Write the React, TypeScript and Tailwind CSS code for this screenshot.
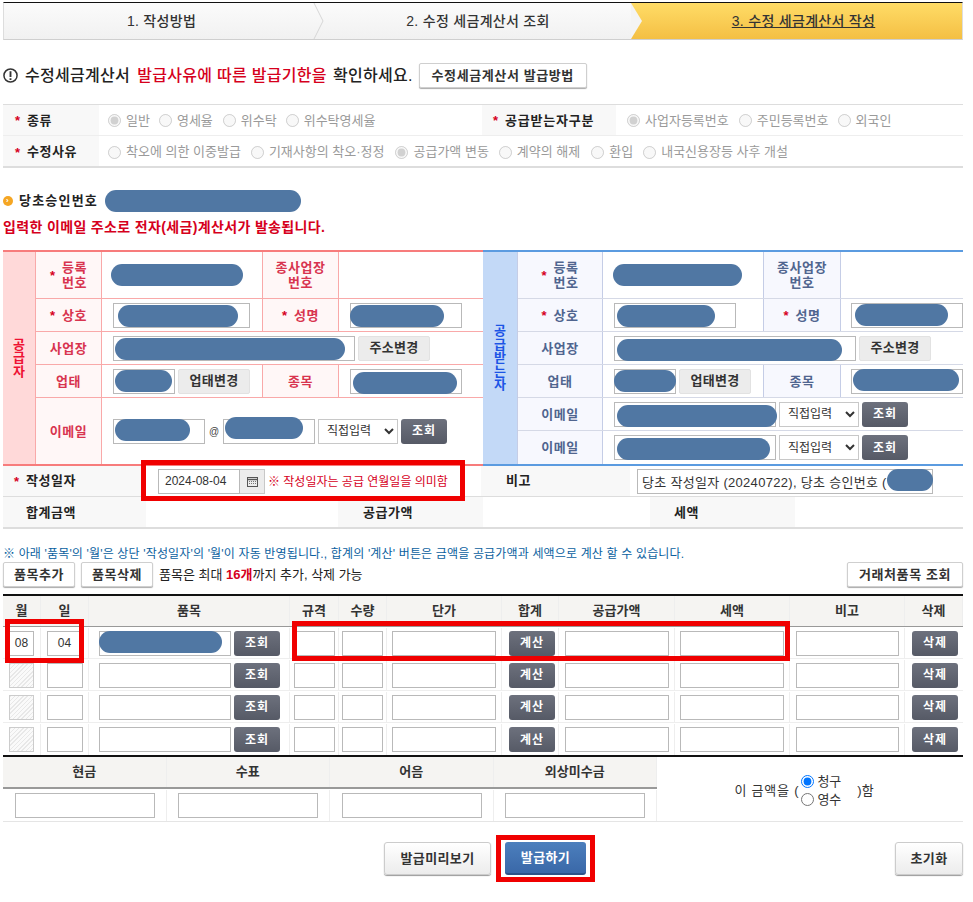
import React from "react";

const inputCls = "block h-[25px] border border-[#b9b9b9] bg-white px-1 text-[12px] text-[#333] outline-none";

const Star = () => <span className="mr-[7px] text-[13px] font-bold leading-none tracking-normal text-[#d6001c]">*</span>;

const DarkBtn = ({ label, w }: { label: string; w: string }) => (
  <button className={`flex h-[25px] items-center justify-center rounded-[3px] bg-gradient-to-b from-[#6d717d] to-[#565a66] text-[12px] font-bold tracking-[1px] text-white ${w}`}>
    {label}
  </button>
);

const GreyBtn = ({ label }: { label: string }) => (
  <button className="flex h-[25px] w-[72px] items-center justify-center rounded-[2px] border border-[#e2e2e2] bg-[#ececec] text-[13px] font-bold tracking-[0.3px] text-[#333]">
    {label}
  </button>
);

const WhiteBtn = ({ label, w }: { label: string; w: string }) => (
  <button className={`flex h-[25px] items-center justify-center rounded-[2px] border border-[#cfcfcf] bg-white text-[13px] font-bold tracking-[0.6px] text-[#333] shadow-[0_1px_1px_#aaa] ${w}`}>
    {label}
  </button>
);

const Radio = ({ label, checked, mr }: { label: string; checked?: boolean; mr: string }) => (
  <label className={`flex items-center text-[13px] text-[#9a9a9a] ${mr}`}>
    <input type="radio" disabled defaultChecked={checked} className="m-0 mr-[5px] h-[13px] w-[13px]" />
    {label}
  </label>
);

const EmailSelect = () => (
  <select defaultValue="직접입력" className="h-[25px] w-[80px] border border-[#c8c8c8] bg-white pl-1 text-[12px] text-[#333]">
    <option>직접입력</option>
  </select>
);

const items = [0, 1, 2, 3];

export default function App() {
  const cellL = "flex items-center justify-center border-r border-[#f9a9a9] bg-[#fff7f7] text-center text-[13px] font-bold leading-[15px] tracking-[0.5px] text-[#d8344f]";
  const cellR = "flex items-center justify-center border-r border-[#c5cde6] bg-[#f7f8fe] text-center text-[13px] font-bold leading-[15px] tracking-[0.5px] text-[#50658f]";
  const rowL = "grid grid-cols-[66px_161px_76px_1fr] border-b border-[#f9a9a9]";
  const rowR = "grid grid-cols-[85px_161px_77px_1fr] border-b border-[#d5d9e6]";
  const th = "flex items-center justify-center border-r border-[#eeeeee] text-[13px] font-bold text-[#333]";
  const td = "flex items-center justify-center border-r border-[#eeeeee]";

  return (
    <div className="relative h-[902px] w-[973px] overflow-hidden bg-white pl-[3px] pr-[10px] pt-[2px] font-['Liberation_Sans','Noto_Sans_CJK_KR',sans-serif] text-[#222]">
      {/* steps */}
      <div className="flex h-[38px] border-x border-b border-t border-x-[#ddd] border-b-[#cfcfcf] border-t-[#111] bg-gradient-to-b from-[#fbfbfb] to-[#f1f1f1] text-[14px] font-medium tracking-[0.3px] text-[#333]">
        <div className="relative flex w-[311px] items-center justify-center pl-[4px]">
          1. 작성방법
          <svg className="absolute right-[-10px] top-0 z-10 h-[36px] w-[12px]" viewBox="0 0 12 36" fill="none">
            <path d="M1 0 L10 18 L1 36" stroke="#d6d6d6" strokeWidth="1" />
          </svg>
        </div>
        <div className="relative flex w-[316px] items-center justify-center pl-[10px]">
          2. 수정 세금계산서 조회
          <svg className="absolute right-[-12px] top-0 z-10 h-[36px] w-[12px]" viewBox="0 0 12 36">
            <path d="M0 0 L11 18 L0 36 Z" fill="#f4f4f4" />
          </svg>
        </div>
        <div className="flex flex-1 items-center justify-center bg-gradient-to-b from-[#ffdc66] to-[#f4bf43] pl-[14px] underline">
          3. 수정 세금계산서 작성
        </div>
      </div>

      {/* heading */}
      <div className="mt-[23px] flex h-[25px] items-center text-[16px] font-medium tracking-[0.3px]">
        <svg className="mr-[7px] h-[15px] w-[15px]" viewBox="0 0 16 16" fill="none">
          <circle cx="8" cy="8" r="7" stroke="#333" strokeWidth="1.6" />
          <path d="M8 3.5 V9.5 M8 11 V12.8" stroke="#333" strokeWidth="2" />
        </svg>
        <span>수정세금계산서</span>
        <span className="ml-[7px] text-[#d6001c]">발급사유에 따른 발급기한을</span>
        <span className="ml-[6px]">확인하세요.</span>
        <WhiteBtn label="수정세금계산서 발급방법" w="ml-[6px] w-[168px]" />
      </div>

      {/* type radios */}
      <div className="mt-[16px] border-b-2 border-t border-b-[#ddd] border-t-[#ddd] text-[13px]">
        <div className="flex h-[31px] border-b border-[#eeeeee]">
          <div className="flex w-[96px] items-center bg-[#f8f8f8] pl-[12px] pt-[1px] font-bold tracking-[0.5px]"><Star />종류</div>
          <div className="flex w-[383px] items-center pl-[9px] pt-[1px]">
            <Radio label="일반" checked mr="mr-[9px]" />
            <Radio label="영세율" mr="mr-[10px]" />
            <Radio label="위수탁" mr="mr-[9px]" />
            <Radio label="위수탁영세율" mr="" />
          </div>
          <div className="flex w-[134px] items-center bg-[#f8f8f8] pl-[11px] pt-[1px] font-bold tracking-[0.8px]"><Star />공급받는자구분</div>
          <div className="flex flex-1 items-center pl-[11px] pt-[1px]">
            <Radio label="사업자등록번호" checked mr="mr-[10px]" />
            <Radio label="주민등록번호" mr="mr-[9px]" />
            <Radio label="외국인" mr="" />
          </div>
        </div>
        <div className="flex h-[30px]">
          <div className="flex w-[96px] items-center bg-[#f8f8f8] pl-[12px] pt-[2px] font-bold tracking-[0.5px]"><Star />수정사유</div>
          <div className="flex flex-1 items-center pl-[9px] pt-[2px]">
            <Radio label="착오에 의한 이중발급" mr="mr-[10px]" />
            <Radio label="기재사항의 착오·정정" mr="mr-[11px]" />
            <Radio label="공급가액 변동" checked mr="mr-[10px]" />
            <Radio label="계약의 해제" mr="mr-[11px]" />
            <Radio label="환입" mr="mr-[10px]" />
            <Radio label="내국신용장등 사후 개설" mr="" />
          </div>
        </div>
      </div>

      {/* original approval no */}
      <div className="mt-[22px] flex h-[22px] items-center text-[13px] font-bold tracking-[1.2px]">
        <span className="mr-[6px] flex h-[10px] w-[10px] items-center justify-center rounded-full bg-[#f5a623] text-[8px] leading-none text-white">›</span>
        당초승인번호
      </div>
      <div className="flex h-[30px] items-center text-[14px] font-bold tracking-[0.35px] text-[#d6001c]">입력한 이메일 주소로 전자(세금)계산서가 발송됩니다.</div>

      {/* supplier / receiver */}
      <div className="mt-[8px] flex h-[216px]">
        <div className="flex w-[480px] border-y-2 border-[#f77c7c]">
          <div className="flex w-[33px] items-center justify-center border-r border-[#f9a9a9] bg-[#ffd9d9]">
            <span className="w-[14px] break-all text-center text-[13px] font-bold leading-[13.5px] text-[#ee1133]">공급자</span>
          </div>
          <div className="flex-1">
            <div className={`${rowL} h-[47px]`}>
              <div className={cellL}><Star /><span>등록<br />번호</span></div>
              <div className="border-r border-[#f9a9a9]" />
              <div className={cellL}>종사업장<br />번호</div>
              <div />
            </div>
            <div className={`${rowL} h-[33px]`}>
              <div className={cellL}><Star />상호</div>
              <div className="flex items-center border-r border-[#f9a9a9] pl-[11px]"><input className={`${inputCls} w-[137px]`} /></div>
              <div className={cellL}><Star />성명</div>
              <div className="flex items-center pl-[11px]"><input className={`${inputCls} w-[112px]`} /></div>
            </div>
            <div className="flex h-[33px] border-b border-[#f9a9a9]">
              <div className={`${cellL} w-[66px]`}>사업장</div>
              <div className="flex flex-1 items-center gap-[3px] pl-[11px]">
                <input className={`${inputCls} w-[242px]`} />
                <GreyBtn label="주소변경" />
              </div>
            </div>
            <div className={`${rowL} h-[33px]`}>
              <div className={cellL}>업태</div>
              <div className="flex items-center gap-[3px] border-r border-[#f9a9a9] pl-[11px]">
                <input className={`${inputCls} w-[62px]`} />
                <GreyBtn label="업태변경" />
              </div>
              <div className={cellL}>종목</div>
              <div className="flex items-center pl-[11px]"><input className={`${inputCls} w-[112px]`} /></div>
            </div>
            <div className="flex h-[66px]">
              <div className={`${cellL} w-[66px]`}>이메일</div>
              <div className="flex flex-1 items-center pl-[11px]">
                <input className={`${inputCls} w-[92px]`} />
                <span className="w-[18px] text-center text-[10px] text-[#444]">@</span>
                <input className={`${inputCls} w-[92px]`} />
                <span className="ml-[3px]"><EmailSelect /></span>
                <span className="ml-[3px]"><DarkBtn label="조회" w="w-[46px]" /></span>
              </div>
            </div>
          </div>
        </div>

        <div className="flex w-[480px] border-y-2 border-[#5b9be0]">
          <div className="flex w-[35px] items-center justify-center border-r border-[#c5cde6] bg-[#c3d9f7]">
            <span className="w-[14px] break-all text-center text-[13px] font-bold leading-[13.5px] text-[#1c55e6]">공급받는자</span>
          </div>
          <div className="flex-1">
            <div className={`${rowR} h-[47px]`}>
              <div className={cellR}><Star /><span>등록<br />번호</span></div>
              <div className="border-r border-[#c5cde6]" />
              <div className={cellR}>종사업장<br />번호</div>
              <div />
            </div>
            <div className={`${rowR} h-[33px]`}>
              <div className={cellR}><Star />상호</div>
              <div className="flex items-center border-r border-[#c5cde6] pl-[11px]"><input className={`${inputCls} w-[122px]`} /></div>
              <div className={cellR}><Star />성명</div>
              <div className="flex items-center pl-[10px]"><input className={`${inputCls} w-[112px]`} /></div>
            </div>
            <div className="flex h-[33px] border-b border-[#d5d9e6]">
              <div className={`${cellR} w-[85px]`}>사업장</div>
              <div className="flex flex-1 items-center gap-[3px] pl-[11px]">
                <input className={`${inputCls} w-[242px]`} />
                <GreyBtn label="주소변경" />
              </div>
            </div>
            <div className={`${rowR} h-[33px]`}>
              <div className={cellR}>업태</div>
              <div className="flex items-center gap-[3px] border-r border-[#c5cde6] pl-[11px]">
                <input className={`${inputCls} w-[62px]`} />
                <GreyBtn label="업태변경" />
              </div>
              <div className={cellR}>종목</div>
              <div className="flex items-center pl-[10px]"><input className={`${inputCls} w-[112px]`} /></div>
            </div>
            {[0, 1].map((i) => (
              <div key={i} className={`flex h-[33px] ${i === 0 ? "border-b border-[#d5d9e6]" : ""}`}>
                <div className={`${cellR} w-[85px]`}>이메일</div>
                <div className="flex flex-1 items-center pl-[11px]">
                  <input className={`${inputCls} w-[162px]`} />
                  <span className="ml-[3px]"><EmailSelect /></span>
                  <span className="ml-[3px]"><DarkBtn label="조회" w="w-[46px]" /></span>
                </div>
              </div>
            ))}
          </div>
        </div>
      </div>

      {/* date / remark */}
      <div className="flex h-[31px] border-b border-[#ddd] text-[13px]">
        <div className="flex w-[143px] items-center bg-[#f8f8f8] pl-[11px] font-bold tracking-[0.5px]"><Star />작성일자</div>
        <div className="flex w-[335px] items-center pl-[12px]">
          <input readOnly value="2024-08-04" className={`${inputCls} w-[82px] pl-[6px]`} />
          <div className="flex h-[25px] w-[25px] items-center justify-center border border-l-0 border-[#c8c8c8] bg-[#ececec]">
            <svg className="h-[11px] w-[11px]" viewBox="0 0 11 11" fill="none">
              <rect x="0.5" y="1.5" width="10" height="9" stroke="#555" />
              <path d="M0.5 3.5 H10.5" stroke="#555" strokeWidth="1.4" />
              <path d="M2 5.5 H9 M2 7.5 H9" stroke="#777" strokeDasharray="1 1" />
            </svg>
          </div>
          <span className="ml-[3px] mt-[1px] whitespace-nowrap text-[12px] text-[#d6001c]">※ 작성일자는 공급 연월일을 의미함</span>
        </div>
        <div className="flex w-[149px] items-center bg-[#f8f8f8] pl-[25px] font-bold tracking-[0.5px]">비고</div>
        <div className="flex flex-1 items-center pl-[7px]">
          <input readOnly value="당초 작성일자 (20240722), 당초 승인번호 (" className={`${inputCls} w-[296px] text-[13px] tracking-[0.3px]`} />
        </div>
      </div>
      <div className="flex h-[32px] border-b-2 border-[#ddd] text-[13px] font-bold tracking-[0.5px]">
        <div className="flex w-[143px] items-center bg-[#f8f8f8] pl-[23px] pt-[2px]">합계금액</div>
        <div className="w-[192px]" />
        <div className="flex w-[145px] items-center bg-[#f8f8f8] pl-[25px] pt-[2px]">공급가액</div>
        <div className="w-[167px]" />
        <div className="flex w-[145px] items-center bg-[#f8f8f8] pl-[24px] pt-[2px]">세액</div>
      </div>

      {/* item note + buttons */}
      <div className="mt-[17px] flex h-[16px] items-center whitespace-nowrap text-[12px] tracking-[0.16px] text-[#0a5fa0]">
        ※ 아래 '품목'의 '월'은 상단 '작성일자'의 '월'이 자동 반영됩니다., 합계의 '계산' 버튼은 금액을 공급가액과 세액으로 계산 할 수 있습니다.
      </div>
      <div className="flex h-[25px] items-center text-[13px]">
        <WhiteBtn label="품목추가" w="w-[72px]" />
        <WhiteBtn label="품목삭제" w="ml-[6px] w-[72px]" />
        <span className="ml-[6px]">품목은 최대 <b className="text-[#d6001c]">16개</b>까지 추가, 삭제 가능</span>
        <WhiteBtn label="거래처품목 조회" w="ml-auto w-[116px]" />
      </div>

      {/* items table */}
      <div className="mt-[7px] border-b-2 border-t-2 border-[#111]">
        <div className="grid h-[31px] grid-cols-[38px_48px_201px_49px_48px_115px_57px_116px_115px_115px_58px] border-b border-[#999] bg-[#f5f4f2]">
          {["월", "일", "품목", "규격", "수량", "단가", "합계", "공급가액", "세액", "비고", "삭제"].map((h) => (
            <div key={h} className={th}>{h}</div>
          ))}
        </div>
        {items.map((i) => (
          <div key={i} className="grid h-[32px] grid-cols-[38px_48px_201px_49px_48px_115px_57px_116px_115px_115px_58px] border-b border-[#eeeeee] pt-[1px] last:border-b-0">
            <div className={td}>
              {i === 0 ? (
                <input readOnly value="08" className={`${inputCls} w-[25px] bg-[#f4f4f4] px-0 text-center`} />
              ) : (
                <div className="h-[25px] w-[25px] border border-[#ccc] bg-[repeating-linear-gradient(135deg,#e8e8e8_0,#e8e8e8_1px,#fafafa_1px,#fafafa_3px)]" />
              )}
            </div>
            <div className={td}>
              <input readOnly value={i === 0 ? "04" : ""} className={`${inputCls} w-[36px] text-center`} />
            </div>
            <div className={`${td} justify-start gap-[3px] pl-[10px]`}>
              <input className={`${inputCls} w-[132px]`} />
              <DarkBtn label="조회" w="w-[46px]" />
            </div>
            <div className={td}><input className={`${inputCls} w-[41px]`} /></div>
            <div className={td}><input className={`${inputCls} w-[41px]`} /></div>
            <div className={td}><input className={`${inputCls} w-[104px]`} /></div>
            <div className={`${td} pl-[4px]`}><DarkBtn label="계산" w="w-[46px]" /></div>
            <div className={td}><input className={`${inputCls} w-[104px]`} /></div>
            <div className={td}><input className={`${inputCls} w-[104px]`} /></div>
            <div className={td}><input className={`${inputCls} w-[103px]`} /></div>
            <div className="flex items-center justify-center pl-[2px]"><DarkBtn label="삭제" w="w-[46px]" /></div>
          </div>
        ))}
      </div>

      {/* payment */}
      <div className="flex border-b border-[#e5e5e5]">
        <div className="w-[654px]">
          <div className="grid h-[32px] grid-cols-4 border-b-2 border-[#999] bg-[#f5f4f2]">
            {["현금", "수표", "어음", "외상미수금"].map((h) => (
              <div key={h} className={th}>{h}</div>
            ))}
          </div>
          <div className="grid h-[32px] grid-cols-4 pt-[1px]">
            {[0, 1, 2, 3].map((i) => (
              <div key={i} className={`${td} pl-[1px]`}><input className={`${inputCls} w-[140px]`} /></div>
            ))}
          </div>
        </div>
        <div className="flex flex-1 items-center justify-center pr-[12px] pt-[3px] text-[13px] text-[#333]">
          <span className="tracking-[0.8px]">이 금액을 (</span>
          <div className="mx-[2px] flex flex-col">
            <label className="flex h-[18px] items-center"><input type="radio" name="pay" defaultChecked className="m-0 mr-[3px] h-[13px] w-[13px]" />청구</label>
            <label className="flex h-[18px] items-center"><input type="radio" name="pay" className="m-0 mr-[3px] h-[13px] w-[13px]" />영수</label>
          </div>
          <span className="ml-[14px]">)함</span>
        </div>
      </div>

      {/* actions */}
      <div className="mt-[20px] flex h-[34px] text-[13px] font-bold tracking-[0.4px]">
        <button className="ml-[381px] h-[33px] w-[107px] rounded-[3px] border border-[#ccc] bg-gradient-to-b from-white to-[#ececec] text-[#333] shadow-[0_1px_1px_#999]">발급미리보기</button>
        <button className="ml-[14px] h-[33px] w-[81px] rounded-[3px] border-b-2 border-[#2c5288] bg-gradient-to-b from-[#4c7fbd] to-[#3a68a8] text-white">발급하기</button>
        <button className="ml-auto h-[33px] w-[68px] rounded-[3px] border border-[#ccc] bg-gradient-to-b from-white to-[#ececec] text-[#333] shadow-[0_1px_1px_#999]">초기화</button>
      </div>

      {/* redaction pills */}
      <div className="pointer-events-none absolute inset-0">
        <div className="absolute left-[105px] top-[190px] h-[22px] w-[196px] rounded-full bg-[#5077a3]" />
        <div className="absolute left-[111px] top-[264px] h-[22px] w-[132px] rounded-full bg-[#5077a3]" />
        <div className="absolute left-[118px] top-[305px] h-[22px] w-[120px] rounded-full bg-[#5077a3]" />
        <div className="absolute left-[350px] top-[305px] h-[22px] w-[94px] rounded-full bg-[#5077a3]" />
        <div className="absolute left-[115px] top-[338px] h-[22px] w-[230px] rounded-full bg-[#5077a3]" />
        <div className="absolute left-[115px] top-[370px] h-[22px] w-[57px] rounded-full bg-[#5077a3]" />
        <div className="absolute left-[353px] top-[372px] h-[22px] w-[104px] rounded-full bg-[#5077a3]" />
        <div className="absolute left-[115px] top-[419px] h-[22px] w-[75px] rounded-full bg-[#5077a3]" />
        <div className="absolute left-[225px] top-[417px] h-[22px] w-[78px] rounded-full bg-[#5077a3]" />
        <div className="absolute left-[613px] top-[264px] h-[22px] w-[129px] rounded-full bg-[#5077a3]" />
        <div className="absolute left-[617px] top-[305px] h-[22px] w-[98px] rounded-full bg-[#5077a3]" />
        <div className="absolute left-[855px] top-[304px] h-[22px] w-[93px] rounded-full bg-[#5077a3]" />
        <div className="absolute left-[617px] top-[339px] h-[22px] w-[225px] rounded-full bg-[#5077a3]" />
        <div className="absolute left-[614px] top-[370px] h-[22px] w-[62px] rounded-full bg-[#5077a3]" />
        <div className="absolute left-[853px] top-[369px] h-[22px] w-[106px] rounded-full bg-[#5077a3]" />
        <div className="absolute left-[617px] top-[405px] h-[22px] w-[160px] rounded-full bg-[#5077a3]" />
        <div className="absolute left-[617px] top-[438px] h-[22px] w-[153px] rounded-full bg-[#5077a3]" />
        <div className="absolute left-[887px] top-[469px] h-[22px] w-[46px] rounded-full bg-[#5077a3]" />
        <div className="absolute left-[99px] top-[631px] h-[22px] w-[123px] rounded-full bg-[#5077a3]" />
      </div>

      {/* red marks */}
      <div className="pointer-events-none absolute inset-0">
        <div className="absolute left-[141px] top-[460px] h-[41px] w-[324px] border-[5px] border-[#f00000]" />
        <div className="absolute left-[5px] top-[619px] h-[44px] w-[79px] border-[5px] border-[#f00000]" />
        <div className="absolute left-[292px] top-[621px] h-[40px] w-[498px] border-[5px] border-[#f00000]" />
        <div className="absolute left-[496px] top-[835px] h-[47px] w-[99px] border-[5px] border-[#f00000]" />
      </div>
    </div>
  );
}
